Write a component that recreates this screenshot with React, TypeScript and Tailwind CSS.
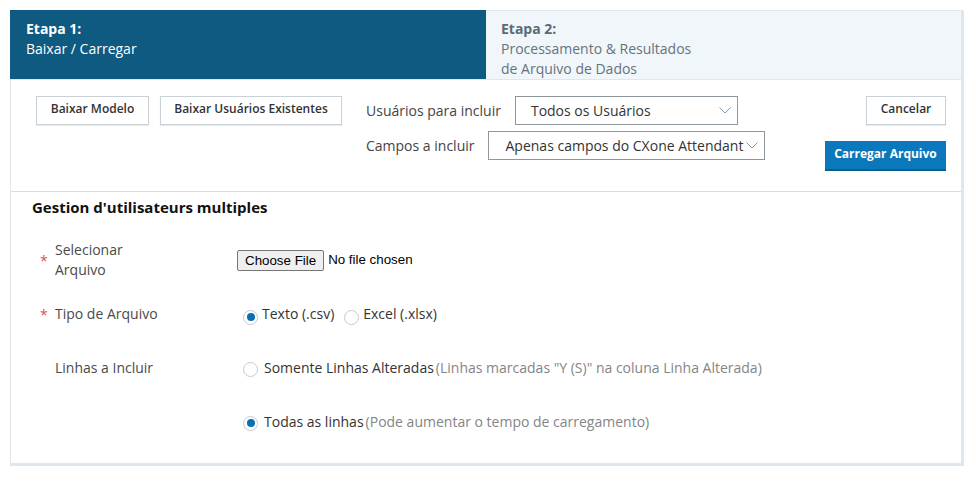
import React from "react";

const font = { fontFamily: '"Open Sans", "Noto Sans", sans-serif' };

function Chevron() {
  return (
    <svg width="12" height="7" viewBox="0 0 12 7" className="shrink-0">
      <polyline points="0.5,0.5 6,6 11.5,0.5" fill="none" stroke="#8d979f" strokeWidth="1" />
    </svg>
  );
}

function Radio({ checked }: { checked?: boolean }) {
  return (
    <span className="flex h-[15px] w-[15px] shrink-0 items-center justify-center rounded-full border border-[#c3cbd2] bg-white">
      {checked && <span className="h-[8px] w-[8px] rounded-full bg-[#0b6fb3]" />}
    </span>
  );
}

export default function App() {
  return (
    <div className="min-h-[499px] bg-white pl-[10px] pt-[10px]" style={font}>
      <div className="w-[954px]">
        {/* header */}
        <div className="flex h-[69px]">
          <div className="w-[476px] bg-[#0f5a80] pl-[16px] pt-[9px] text-[14px] leading-[20px] text-white">
            <div className="font-bold">Etapa 1:</div>
            <div>Baixar / Carregar</div>
          </div>
          <div className="flex-1 border-t border-r-[3px] border-[#dfe7ee] bg-[#f0f6f9] pl-[15px] pt-[8px] text-[14px] leading-[20px] text-[#66737d]">
            <div className="font-bold text-[#5b6a75]">Etapa 2:</div>
            <div>Processamento &amp; Resultados</div>
            <div>de Arquivo de Dados</div>
          </div>
        </div>

        {/* body */}
        <div className="border-t border-l border-r-[3px] border-b-[3px] border-[#dfe7ee]">
          {/* toolbar */}
          <div className="flex h-[112px] border-b border-[#d6dee5] pt-[16px] pr-[15px]">
            <div className="flex gap-[11px] pl-[25px]">
              <button className="h-[29px] w-[113px] border border-[#c9d0d6] bg-white pb-[3px] text-[12px] font-semibold text-[#333] shadow-[0_1px_1px_rgba(0,0,0,0.08)]">
                Baixar Modelo
              </button>
              <button className="h-[29px] w-[182px] border border-[#c9d0d6] bg-white pb-[3px] text-[12px] font-semibold text-[#333] shadow-[0_1px_1px_rgba(0,0,0,0.08)]">
                Baixar Usuários Existentes
              </button>
            </div>
            <div className="ml-[24px] flex flex-col gap-[6px] text-[14px] text-[#444]">
              <div className="flex items-center gap-[14px]">
                <span>Usuários para incluir</span>
                <div className="flex h-[29px] w-[223px] items-center justify-between border border-[#8e979e] bg-white pl-[15px] pr-[6px] text-[#333]">
                  <span>Todos os Usuários</span>
                  <Chevron />
                </div>
              </div>
              <div className="flex items-center gap-[14px]">
                <span>Campos a incluir</span>
                <div className="flex h-[29px] w-[277px] items-center justify-between border border-[#8e979e] bg-white pl-[16px] pr-[6px] text-[#333]">
                  <span className="whitespace-nowrap">Apenas campos do CXone Attendant</span>
                  <Chevron />
                </div>
              </div>
            </div>
            <div className="ml-auto flex flex-col items-end">
              <button className="h-[29px] w-[80px] border border-[#c9d0d6] bg-white pb-[3px] text-[12px] font-semibold text-[#333] shadow-[0_1px_1px_rgba(0,0,0,0.08)]">
                Cancelar
              </button>
              <button className="mt-[16px] h-[30px] w-[121px] border-b-2 border-[#075e92] bg-[#0a78bb] pb-[3px] text-[12px] font-bold text-white">
                Carregar Arquivo
              </button>
            </div>
          </div>

          {/* form */}
          <div className="pt-[4px] pb-[14px]">
            <div className="pl-[21px] text-[15px] font-bold leading-[22px] text-[#111]">
              Gestion d&apos;utilisateurs multiples
            </div>
            <div className="mt-[15px] flex flex-col text-[14px] leading-[20px]">
              {/* row 1 */}
              <div className="flex h-[54px] items-center pl-[29px]">
                <span className="w-[15px] pt-[2px] text-[#d9534f]">*</span>
                <div className="w-[182px] text-[#4a4a4a]">
                  <div className="w-[110px]">Selecionar Arquivo</div>
                </div>
                <div className="flex items-center" style={{ fontFamily: '"Liberation Sans", Arial, sans-serif' }}>
                  <button className="h-[21px] rounded-[2px] border border-[#767676] bg-[#efefef] px-[7px] text-[13.33px] leading-[17px] text-black">
                    Choose File
                  </button>
                  <span className="ml-[4px] text-[13.33px] text-black">No file chosen</span>
                </div>
              </div>
              {/* row 2 */}
              <div className="flex h-[54px] items-center pl-[29px]">
                <span className="w-[15px] pt-[2px] text-[#d9534f]">*</span>
                <div className="w-[182px] text-[#4a4a4a]">Tipo de Arquivo</div>
                <div className="ml-[6px] flex items-center text-[#333]">
                  <span className="translate-y-[3px]"><Radio checked /></span>
                  <span className="ml-[4px]">Texto (.csv)</span>
                  <span className="ml-[10px] translate-y-[3px]"><Radio /></span>
                  <span className="ml-[4px]">Excel (.xlsx)</span>
                </div>
              </div>
              {/* row 3 */}
              <div className="flex h-[54px] items-center pl-[29px]">
                <span className="w-[15px]" />
                <div className="w-[182px] text-[#4a4a4a]">Linhas a Incluir</div>
                <div className="ml-[6px] flex items-center text-[#333]">
                  <span className="translate-y-[1px]"><Radio /></span>
                  <span className="ml-[6px]">Somente Linhas Alteradas</span>
                  <span className="ml-[2px] text-[#858585]">(Linhas marcadas "Y (S)" na coluna Linha Alterada)</span>
                </div>
              </div>
              {/* row 4 */}
              <div className="flex h-[54px] items-center pl-[29px]">
                <span className="w-[15px]" />
                <div className="w-[182px]" />
                <div className="ml-[6px] flex items-center text-[#333]">
                  <span className="translate-y-[1px]"><Radio checked /></span>
                  <span className="ml-[6px]">Todas as linhas</span>
                  <span className="ml-[2px] text-[#858585]">(Pode aumentar o tempo de carregamento)</span>
                </div>
              </div>
            </div>
          </div>
        </div>
      </div>
    </div>
  );
}
